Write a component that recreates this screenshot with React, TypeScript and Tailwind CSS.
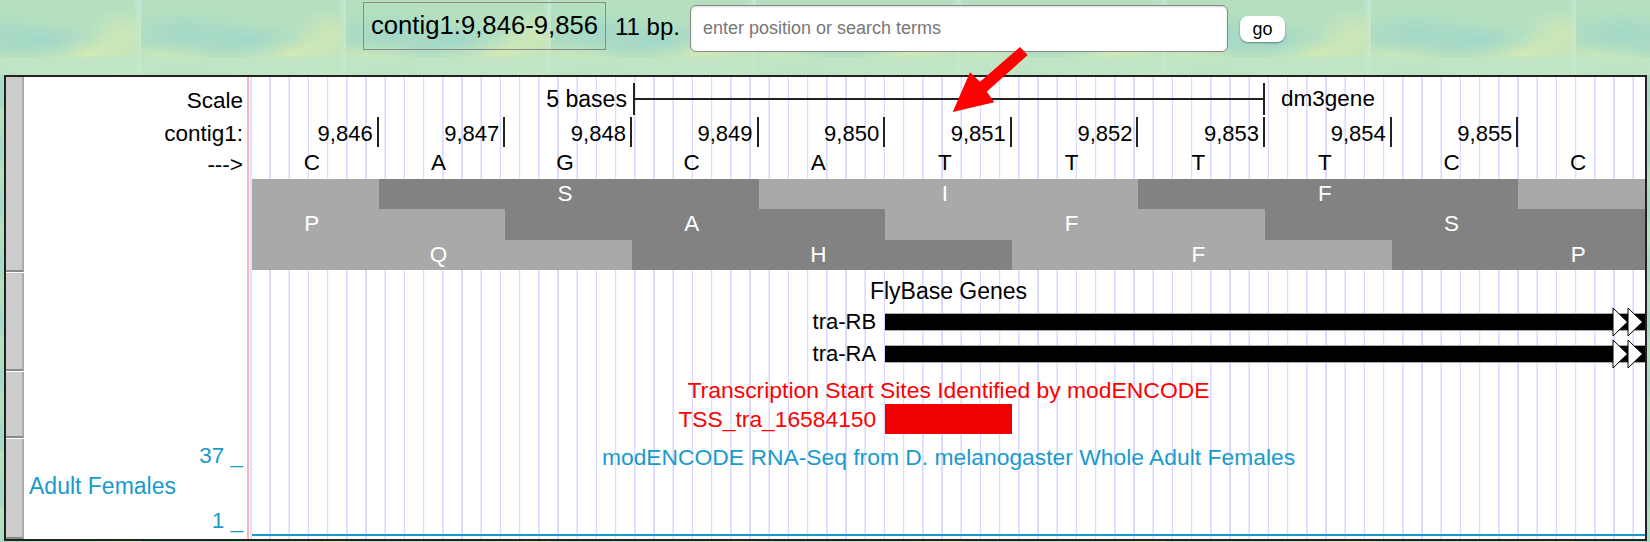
const positions = ['9,846', '9,847', '9,848', '9,849', '9,850', '9,851', '9,852', '9,853', '9,854', '9,855', ''];
const bases = ['C', 'A', 'G', 'C', 'A', 'T', 'T', 'T', 'T', 'C', 'C'];

// one row per reading frame, 1 = dark codon, 0 = light codon
const frames = [
  { shades: [0, 1, 1, 1, 0, 0, 0, 1, 1, 1, 0], letters: ['', '', 'S', '', '', 'I', '', '', 'F', '', ''], height: 'h-[30px]' },
  { shades: [0, 0, 1, 1, 1, 0, 0, 0, 1, 1, 1], letters: ['P', '', '', 'A', '', '', 'F', '', '', 'S', ''], height: 'h-[31px]' },
  { shades: [0, 0, 0, 1, 1, 1, 0, 0, 0, 1, 1], letters: ['', 'Q', '', '', 'H', '', '', 'F', '', '', 'P'], height: 'h-[30px]' },
];

function GeneRow({ name }: { name: string }) {
  return (
    <div className="grid h-[18px] grid-cols-11 items-center">
      <div className="col-span-5 pr-[9px] text-right text-[22px] leading-none">{name}</div>
      <div className="relative col-span-6 h-[18px] border-y border-[#aaa] bg-black">
        <svg className="absolute -top-[7px] right-[2px] h-[30px] w-[31px]" viewBox="0 0 31 30">
          <path d="M1 1 L15.5 15 L1 29 Z" fill="#fff" stroke="#000" strokeWidth="1" />
          <path d="M16 1 L30.5 15 L16 29 Z" fill="#fff" stroke="#000" strokeWidth="1" />
        </svg>
      </div>
    </div>
  );
}

export default function App() {
  return (
    <div className="relative h-[542px] w-[1650px] overflow-hidden bg-[#b5e0bf] bg-[radial-gradient(ellipse_70px_24px_at_22%_58%,#a3d8c8,transparent),radial-gradient(ellipse_60px_20px_at_52%_72%,#a0d7c9,transparent),radial-gradient(ellipse_70px_20px_at_72%_92%,#d6eab6,transparent),radial-gradient(ellipse_36px_26px_at_92%_60%,#cfe8b8,transparent),radial-gradient(ellipse_50px_14px_at_12%_100%,#cde8ba,transparent),linear-gradient(to_right,transparent_96%,#c6e6d6)] bg-[size:205px_57px] bg-[position:141px_0] font-['Liberation_Sans',Arial,sans-serif] text-[22.5px] text-black">
      {/* position search bar */}
      <div className="flex h-[75px] items-start bg-[linear-gradient(to_bottom,transparent_57px,rgba(200,232,200,0.6)_57px)] pl-[363px]">
        <div className="mt-[2px] flex h-[48px] w-[243px] items-center justify-center border border-[#8a8a8a] text-[25.7px] leading-none">
          contig1:9,846-9,856
        </div>
        <span className="ml-[9px] mt-[15px] w-[75px] text-[24px] leading-none">11 bp.</span>
        <input
          className="mt-[5px] h-[47px] w-[538px] rounded-md border border-[#888] bg-white px-3 text-[18px] shadow-[inset_0_1px_2px_rgba(0,0,0,0.15)] placeholder:text-[#777]"
          placeholder="enter position or search terms"
        />
        <button className="ml-[12px] mt-[16px] h-[26px] w-[45px] rounded-lg bg-white text-[18px] leading-none shadow-[0_1px_2px_rgba(0,0,0,0.4)]">
          go
        </button>
      </div>

      <div className="ml-[4px] flex h-[466px] w-[1643px] border-2 border-[#222] bg-white">
        {/* track drag handles */}
        <div className="flex w-[18px] flex-col gap-px">
          <div className="h-[195px] border-b-2 border-r-2 border-b-[#888] border-r-[#aaa] bg-[#ccc]" />
          <div className="h-[98px] border-b-2 border-r-2 border-b-[#888] border-r-[#aaa] bg-[#ccc]" />
          <div className="h-[66px] border-b-2 border-r-2 border-b-[#888] border-r-[#aaa] bg-[#ccc]" />
          <div className="flex-1 border-b-2 border-r-2 border-b-[#888] border-r-[#aaa] bg-[#ccc]" />
        </div>

        {/* side labels */}
        <div className="flex w-[223px] flex-col pr-[4px] text-right">
          <div className="flex h-[40px] items-center justify-end pt-[9px] leading-none">Scale</div>
          <div className="flex h-[30px] items-center justify-end pt-[5px] leading-none">contig1:</div>
          <div className="flex h-[32px] items-center justify-end pt-[4px] leading-none">---&gt;</div>
          <div className="h-[265px]" />
          <div className="flex h-[26px] items-center justify-end leading-none text-[#1a9acb]">37 _</div>
          <div className="flex h-[34px] items-center pl-[5px] text-[23px] leading-none text-[#1a9acb]">Adult Females</div>
          <div className="flex h-[36px] items-center justify-end leading-none text-[#1a9acb]">1 _</div>
        </div>

        {/* browser image */}
        <div className="flex flex-1 flex-col border-l-2 border-[#ffb4b4] bg-[repeating-linear-gradient(to_right,transparent_0,transparent_0.8px,#dcdcff_1.3px,#d8d8ff_2.3px,transparent_2.8px,transparent_19.2px)] pl-[3px]">
          <div className="grid h-[40px] grid-cols-11 items-end pb-[2px]">
            <div className="col-span-3 self-center pr-[5px] pt-[6px] text-right text-[23px] leading-none">5 bases</div>
            <div className="col-span-5 ml-px flex h-[32px] items-center border-x-2 border-[#222]">
              <div className="h-[2px] w-full bg-[#222]" />
            </div>
            <div className="col-span-3 self-center pl-[16px] pt-[6px] leading-none">dm3gene</div>
          </div>

          <div className="grid h-[30px] grid-cols-11">
            {positions.map((pos, i) => (
              <div key={i} className={`flex items-center justify-end pr-[4px] pt-[4px] text-[22px] leading-none ${pos ? 'border-r-2 border-[#222]' : ''}`}>
                {pos}
              </div>
            ))}
          </div>

          <div className="grid h-[32px] grid-cols-11">
            {bases.map((base, i) => (
              <div key={i} className="flex items-center justify-center pr-[7px] leading-none">
                {base}
              </div>
            ))}
          </div>

          {frames.map((frame, f) => (
            <div key={f} className={`grid grid-cols-11 ${frame.height}`}>
              {frame.shades.map((shade, i) => (
                <div
                  key={i}
                  className={`flex items-center justify-center pr-[7px] leading-none text-white ${shade ? 'bg-[#828282]' : 'bg-[#a9a9a9]'}`}
                >
                  {frame.letters[i]}
                </div>
              ))}
            </div>
          ))}

          <div className="flex h-[41px] items-center justify-center pt-[1px] text-[23px] leading-none">FlyBase Genes</div>
          <GeneRow name="tra-RB" />
          <div className="h-[14px]" />
          <GeneRow name="tra-RA" />

          <div className="flex h-[43px] items-end justify-center pb-[2px] text-[22.9px] leading-none text-[#f00]">
            Transcription Start Sites Identified by modENCODE
          </div>
          <div className="grid h-[30px] grid-cols-11 items-center text-[#f00]">
            <div className="col-span-5 pr-[9px] text-right text-[22.8px] leading-none">TSS_tra_16584150</div>
            <div className="h-[30px] bg-[#f00000]" />
          </div>

          <div className="flex h-[46px] items-start justify-center pt-[12px] text-[22.85px] leading-none text-[#1a9acb]">
            modENCODE RNA-Seq from D. melanogaster Whole Adult Females
          </div>
          <div className="mt-auto mb-[3px] h-[2px] bg-[#1a9acb]" />
        </div>
      </div>

      {/* annotation arrow pointing at base 9,851 */}
      <svg className="absolute left-[950px] top-[45px] h-[70px] w-[80px]" viewBox="0 0 80 70">
        <polygon points="70,2 77.7,10 36.7,46.7 44.3,57.3 2.7,67 20,27.3 30,36.7" fill="#f00" />
      </svg>
    </div>
  );
}
